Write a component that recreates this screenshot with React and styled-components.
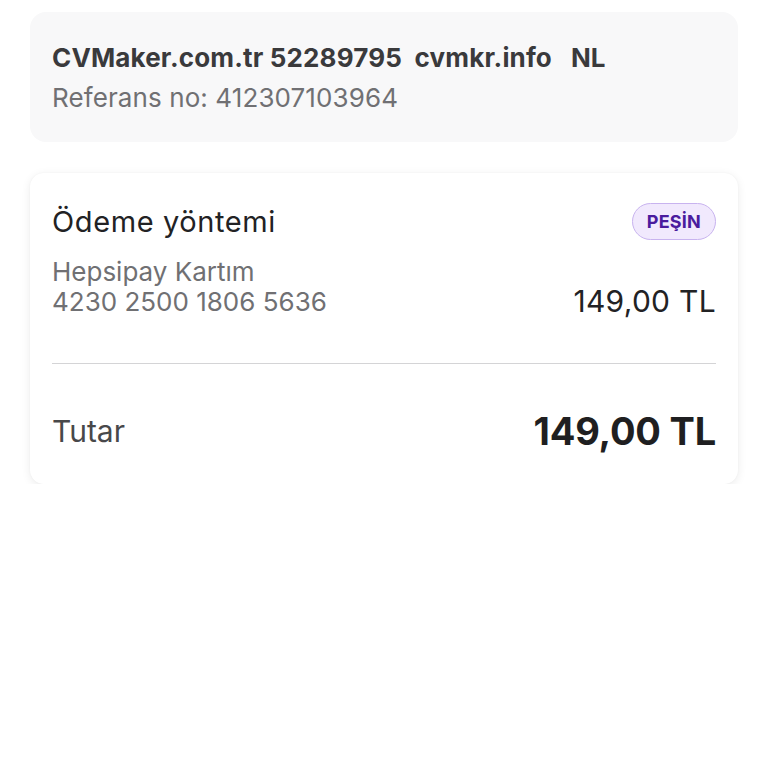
import React from "react";
import styled, { createGlobalStyle } from "styled-components";

const Global = createGlobalStyle`
  html, body { margin: 0; padding: 0; background: #ffffff; }
  body { font-family: Inter, "Noto Sans", "Liberation Sans", sans-serif; }
`;

const Page = styled.div`
  display: flex;
  flex-direction: column;
  gap: 31px;
  padding: 12px 30px 0 30px;
`;

const InfoBox = styled.section`
  background: #f8f8f9;
  border-radius: 16px;
  padding: 29px 22px 27px 22px;
  display: flex;
  flex-direction: column;
  gap: 6px;
`;

const Merchant = styled.div`
  font-size: 26px;
  font-weight: 700;
  color: #3a3a3c;
  white-space: pre;
  letter-spacing: 0.15px;
  line-height: 34px;
`;

const Reference = styled.div`
  font-size: 26px;
  color: #707073;
  line-height: 34px;
  letter-spacing: 0.1px;
`;

const Card = styled.section`
  background: #ffffff;
  border-radius: 14px;
  box-shadow: 0 2px 10px rgba(0, 0, 0, 0.08), 0 0 2px rgba(0, 0, 0, 0.04);
  padding: 30px 22px 31px 22px;
  display: flex;
  flex-direction: column;
`;

const Row = styled.div`
  display: flex;
  justify-content: space-between;
  align-items: ${(p) => p.$align || "center"};
  margin-top: ${(p) => p.$top || 0}px;
`;

const Title = styled.div`
  font-size: 29px;
  color: #222224;
  line-height: 37px;
  letter-spacing: 0.6px;
`;

const Badge = styled.span`
  display: inline-flex;
  align-items: center;
  justify-content: center;
  box-sizing: border-box;
  height: 37px;
  padding: 0 14px;
  border-radius: 19px;
  border: 1.5px solid #c8b3ef;
  background: #f1e9fd;
  color: #4a1c9e;
  font-weight: 700;
  font-size: 18px;
  letter-spacing: 0.2px;
`;

const CardInfo = styled.div`
  display: flex;
  flex-direction: column;
  color: #707073;
  font-size: 26px;
  line-height: 30px;
`;

const Amount = styled.div`
  font-size: 30px;
  color: #222224;
  line-height: 32px;
  letter-spacing: 0.3px;
`;

const Divider = styled.hr`
  border: none;
  border-top: 1.5px solid #d4d4d6;
  margin: 46px 0 0 0;
`;

const TotalLabel = styled.div`
  font-size: 30px;
  color: #48484a;
  line-height: 44px;
`;

const TotalAmount = styled.div`
  font-size: 38px;
  font-weight: 700;
  color: #1f1f21;
  line-height: 44px;
  letter-spacing: -0.2px;
`;

export default function App() {
  return (
    <>
      <Global />
      <Page>
        <InfoBox>
          <Merchant>{"CVMaker.com.tr 52289795  cvmkr.info   NL"}</Merchant>
          <Reference>Referans no: 412307103964</Reference>
        </InfoBox>
        <Card>
          <Row>
            <Title>Ödeme yöntemi</Title>
            <Badge>PEŞİN</Badge>
          </Row>
          <Row $align="flex-end" $top={17}>
            <CardInfo>
              <span>Hepsipay Kartım</span>
              <span>4230 2500 1806 5636</span>
            </CardInfo>
            <Amount>149,00 TL</Amount>
          </Row>
          <Divider />
          <Row $top={45}>
            <TotalLabel>Tutar</TotalLabel>
            <TotalAmount>149,00 TL</TotalAmount>
          </Row>
        </Card>
      </Page>
    </>
  );
}
